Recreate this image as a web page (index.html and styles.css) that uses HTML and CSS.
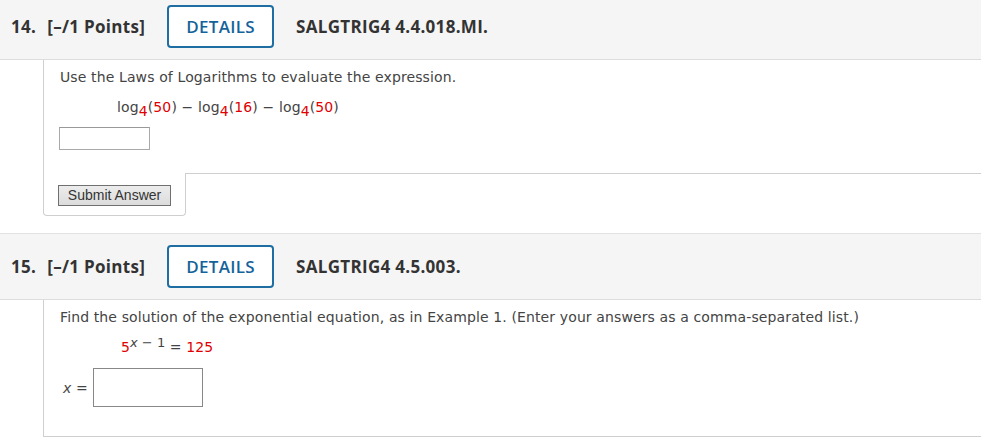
FILE: index.html
```html
<!DOCTYPE html>
<html>
<head>
<meta charset="utf-8">
<link rel="stylesheet" href="styles.css">
</head>
<body>
<div class="page">
  <div class="qhead">
    <span class="num">14.</span>
    <span class="pts">[–/1 Points]</span>
    <span class="details">DETAILS</span>
    <span class="code">SALGTRIG4 4.4.018.MI.</span>
  </div>
  <div class="qwrap">
    <div class="qbody q1">
      <p class="prompt">Use the Laws of Logarithms to evaluate the expression.</p>
      <p class="eq">log<sub class="red">4</sub>(<span class="red">50</span>) − log<sub class="red">4</sub>(<span class="red">16</span>) − log<sub class="red">4</sub>(<span class="red">50</span>)</p>
      <div class="answer1"></div>
    </div>
    <div class="footer">
      <div class="tab"><span class="submit">Submit Answer</span></div>
      <div class="rest"></div>
    </div>
  </div>

  <div class="qhead second">
    <span class="num">15.</span>
    <span class="pts">[–/1 Points]</span>
    <span class="details">DETAILS</span>
    <span class="code">SALGTRIG4 4.5.003.</span>
  </div>
  <div class="qwrap">
    <div class="qbody q2">
      <p class="prompt">Find the solution of the exponential equation, as in Example 1. (Enter your answers as a comma-separated list.)</p>
      <p class="eq eq2"><span class="red">5</span><sup><i>x</i> − 1</sup> = <span class="red">125</span></p>
      <div class="xrow"><span class="xlabel"><i>x</i> =</span><span class="answer2"></span></div>
    </div>
  </div>
</div>
</body>
</html>
```
FILE: styles.css
```css
html, body {
  margin: 0;
  padding: 0;
  background: #fff;
}
.page {
  margin-top: -7px;
}
.qhead {
  display: flex;
  align-items: center;
  background: #f5f5f5;
  border-top: 1px solid #e2e2e2;
  border-bottom: 1px solid #dcdcdc;
  padding: 11px 0 11px 11px;
  font-family: "Open Sans", sans-serif;
  font-weight: 700;
  font-size: 17px;
  letter-spacing: 0.3px;
  color: #333;
}
.qhead.second {
  margin-top: 17px;
}
.num {
  margin-right: 11px;
}
.pts {
  margin-right: 22px;
}
.details {
  box-sizing: border-box;
  height: 43px;
  width: 107px;
  display: flex;
  align-items: center;
  justify-content: center;
  border: 2px solid #1f6ea3;
  border-radius: 4px;
  background: #fff;
  color: #15639b;
  font-weight: 600;
  margin-right: 22px;
}
.qwrap {
  margin-left: 43px;
}
.qbody {
  border-left: 1px solid #cfcfcf;
  padding: 7px 0 0 16px;
  font-family: Verdana, "DejaVu Sans", sans-serif;
  font-size: 14px;
  letter-spacing: 0.12px;
  color: #444;
}
.prompt, .eq {
  margin: 0;
  line-height: 20px;
}
.eq {
  margin-top: 10px;
  padding-left: 57px;
}
.red {
  color: #e00000;
}
sub {
  font-size: 14px;
  vertical-align: -4px;
  line-height: 0;
}
.q1 {
  height: 106px;
}
.answer1 {
  margin-top: 10px;
  margin-left: -1px;
  width: 89px;
  height: 21px;
  border: 1px solid #a9a9a9;
  border-top-color: #999;
}
.footer {
  display: flex;
}
.tab {
  border: 1px solid #cfcfcf;
  border-top: none;
  border-radius: 0 0 4px 4px;
  padding: 12px 14px 9px 14px;
}
.submit {
  display: block;
  box-sizing: border-box;
  width: 113px;
  height: 21px;
  border: 1px solid #707070;
  background: linear-gradient(#ececec, #dcdcdc);
  font-family: Arial, "Liberation Sans", sans-serif;
  font-size: 14px;
  line-height: 19px;
  color: #333;
  text-align: center;
}
.rest {
  flex: 1;
  border-top: 1px solid #cfcfcf;
}
.q2 {
  border-bottom: 1px solid #cfcfcf;
  padding-bottom: 29px;
}
.eq2 {
  padding-left: 61px;
}
sup {
  font-size: 13px;
  vertical-align: 5px;
  line-height: 0;
  letter-spacing: 0;
}
.xrow {
  display: flex;
  align-items: center;
  margin-top: 11px;
}
.xlabel {
  margin-left: 3px;
  margin-right: 5px;
}
.answer2 {
  box-sizing: border-box;
  width: 110px;
  height: 39px;
  border: 1px solid #888;
}
```
